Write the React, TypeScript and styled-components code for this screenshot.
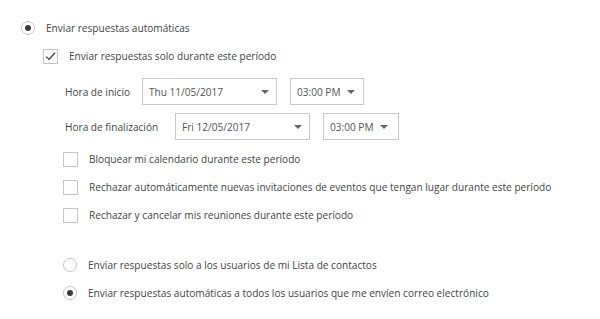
import React, { useState } from 'react'
import styled, { createGlobalStyle } from 'styled-components';

const GlobalStyle = createGlobalStyle`
  body {
    margin: 0;
    background: #ffffff;
    font-family: "Open Sans", "Noto Sans", sans-serif;
    color: #444444;
  }
`

const Panel = styled.div`
  padding: 21px 0 0 21px;
  font-size: 10.1px;
  display: flex;
  flex-direction: column;
`

const Row = styled.label<{ $indent: number; $height?: number }>`
  display: flex;
  align-items: center;
  height: ${p => p.$height ?? 28}px;
  padding-left: ${p => p.$indent}px;
  gap: 11px;
  cursor: pointer;
`

const RadioCircle = styled.span<{ $checked: boolean }>`
  width: 12px;
  height: 12px;
  border-radius: 50%;
  border: 1px solid #c6c6c6;
  background: #fff;
  display: flex;
  align-items: center;
  justify-content: center;
  flex-shrink: 0;

  &::after{
    content: '';
    width: 6px;
    height: 6px;
    border-radius: 50%;
    background: ${p => p.$checked ? '#3a3a3a' : 'transparent'};
  }
`

const CheckBox = styled.span`
  width: 13px;
  height: 13px;
  border: 1px solid #c6c6c6;
  background: #fff;
  flex-shrink: 0;
  display: flex;
  align-items: center;
  justify-content: center;

  svg{
    width: 13px;
    height: 13px;
  }
`

const TimeRow = styled.div<{ $top: number }>`
  display: flex;
  align-items: center;
  padding-left: 44px;
  margin-top: ${p => p.$top}px;
  height: 29px;
`

const TimeLabel = styled.span<{ $width: number }>`
  width: ${p => p.$width}px;
  flex-shrink: 0;
`

const Select = styled.div<{ $width: number; $gap?: number; $compact?: boolean }>`
  width: ${p => p.$width}px;
  height: 27px;
  box-sizing: border-box;
  border: 1px solid #c8c8c8;
  display: flex;
  align-items: center;
  justify-content: ${p => p.$compact ? 'flex-start' : 'space-between'};
  gap: 6px;
  padding: 0 7px 0 6px;
  margin-right: ${p => p.$gap ?? 0}px;
  color: #555;

  &::after{
    content: '';
    border-left: 4px solid transparent;
    border-right: 4px solid transparent;
    border-top: 4.5px solid #666;
    margin-top: 1px;
  }
`

const Spacer = styled.div`
  height: 22px;
`

const Check = () => (
  <svg viewBox="0 0 13 13">
    <path d="M2.2 6.6 L5.1 9.4 L11 2.8" fill="none" stroke="#3a3a3a" strokeWidth="1.3" />
  </svg>
)

export default function App() {
  const [mode, setMode] = useState('auto');
  const [audience, setAudience] = useState('all');
  const [period, setPeriod] = useState(true);
  const [opts, setOpts] = useState([false, false, false]);

  const options = [
    'Bloquear mi calendario durante este período',
    'Rechazar automáticamente nuevas invitaciones de eventos que tengan lugar durante este período',
    'Rechazar y cancelar mis reuniones durante este período',
  ];

  return (
    <>
      <GlobalStyle />
      <Panel>
        <Row $indent={0} $height={14} onClick={() => setMode('auto')}>
          <RadioCircle $checked={mode === 'auto'} />
          <span>Enviar respuestas automáticas</span>
        </Row>
        <Row $indent={22} $height={42} onClick={() => setPeriod(!period)}>
          <CheckBox>{period && <Check />}</CheckBox>
          <span>Enviar respuestas solo durante este período</span>
        </Row>

        <TimeRow $top={0}>
          <TimeLabel $width={77}>Hora de inicio</TimeLabel>
          <Select $width={135} $gap={13}>Thu 11/05/2017</Select>
          <Select $width={74} $compact>03:00 PM</Select>
        </TimeRow>
        <TimeRow $top={6}>
          <TimeLabel $width={110}>Hora de finalización</TimeLabel>
          <Select $width={135} $gap={13}>Fri 12/05/2017</Select>
          <Select $width={76} $compact>03:00 PM</Select>
        </TimeRow>

        <div style={{ height: 4 }} />
        {options.map((text, i) => (
          <Row key={i} $indent={42} onClick={() => setOpts(opts.map((v, j) => j === i ? !v : v))}>
            <CheckBox>{opts[i] && <Check />}</CheckBox>
            <span>{text}</span>
          </Row>
        ))}

        <Spacer />
        <Row $indent={42} onClick={() => setAudience('contacts')}>
          <RadioCircle $checked={audience === 'contacts'} />
          <span>Enviar respuestas solo a los usuarios de mi Lista de contactos</span>
        </Row>
        <Row $indent={42} onClick={() => setAudience('all')}>
          <RadioCircle $checked={audience === 'all'} />
          <span>Enviar respuestas automáticas a todos los usuarios que me envíen correo electrónico</span>
        </Row>
      </Panel>
    </>
  )
}
